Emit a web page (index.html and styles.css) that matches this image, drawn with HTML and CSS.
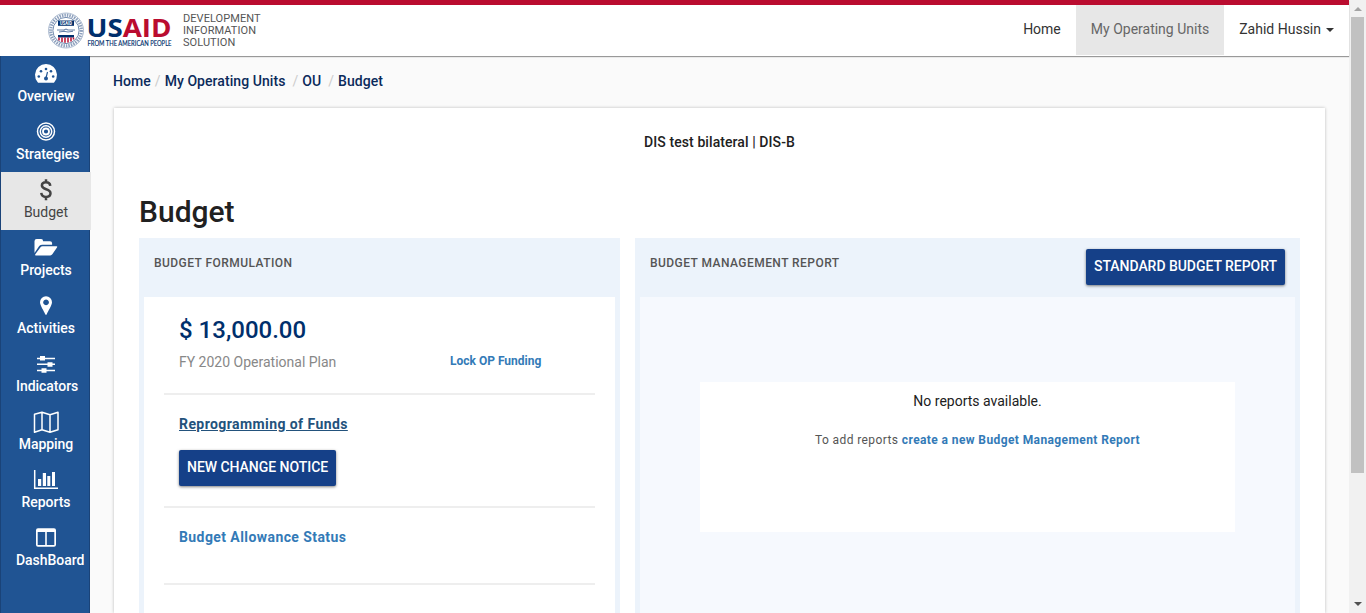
FILE: index.html
```
<!DOCTYPE html>
<html lang="en">
<head>
<meta charset="utf-8">
<title>Budget</title>
<link rel="stylesheet" href="styles.css">
</head>
<body>
<div class="page">
  <header class="topbar">
    <svg class="logo" width="125" height="38" viewBox="0 0 125 38">
      <circle cx="18" cy="18.500" r="15.300" fill="none" stroke="#8da0bd" stroke-width="3.200" stroke-dasharray="1.500 1"/>
      <circle cx="18" cy="18.500" r="17.500" fill="none" stroke="#8da0bd" stroke-width=".7"/>
      <circle cx="18" cy="18.500" r="13.100" fill="#fff" stroke="#6681a8" stroke-width=".9"/>
      <path d="M10 8.500h16v5.300H10z" fill="#002f6c"/>
      <text class="seal-text" x="12" y="12.800" textLength="12" lengthAdjust="spacingAndGlyphs">USAID</text>
      <path d="M9 18h7l2-1 2 1h7M11 20l5-.8 4 .8 5-.8" fill="none" stroke="#6681a8" stroke-width="1.100"/>
      <path d="M10 23h16v2.500H10z" fill="#002f6c"/>
      <path d="M11 25.500v3M14 25.500v4.500M17 25.500v5.300M20 25.500v5M23 25.500v4M25.500 25.500v2" stroke="#ba0c2f" stroke-width="1.500"/>
      <text class="logo-word" x="38.500" y="25.300" textLength="85" lengthAdjust="spacingAndGlyphs"><tspan fill="#002f6c">US</tspan><tspan fill="#ba0c2f">AID</tspan></text>
      <text class="logo-tag" x="39.500" y="33.800" textLength="84" lengthAdjust="spacingAndGlyphs">FROM THE AMERICAN PEOPLE</text>
    </svg>
    <div class="product">DEVELOPMENT<br>INFORMATION<br>SOLUTION</div>
    <nav class="topnav">
      <a class="topnav-item">Home</a>
      <a class="topnav-item topnav-active">My Operating Units</a>
      <a class="topnav-item">Zahid Hussin<span class="caret"></span></a>
    </nav>
  </header>
  <div class="body">
    <aside class="sidebar">
      <a class="side-item"><svg class="icon" viewBox="0 0 24 20"><path d="M3.700 18.300A11 11 0 1 1 20.300 18.300Q20 18.800 19.300 18.800H4.700Q4 18.800 3.700 18.300z" fill="#fff"/><g fill="#205493"><circle cx="4.800" cy="12.500" r="1.300"/><circle cx="7" cy="7.200" r="1.300"/><circle cx="12" cy="5" r="1.300"/><circle cx="17" cy="7.200" r="1.300"/><circle cx="19.200" cy="12.500" r="1.300"/><circle cx="12" cy="14.500" r="2"/></g><path d="m12 14 1.500-6" stroke="#205493" stroke-width="1.200"/></svg><span>Overview</span></a>
      <a class="side-item"><svg class="icon" viewBox="0 0 24 20"><g fill="none" stroke="#fff" stroke-width="1.500"><circle cx="12" cy="9.500" r="8.500"/><circle cx="12" cy="9.500" r="5.700"/><circle cx="12" cy="9.500" r="3" stroke-width="1.800"/></g></svg><span>Strategies</span></a>
      <a class="side-item side-active"><svg class="icon" viewBox="0 0 24 20"><path d="M16.300 5.800C16 3.300 14.300 2.300 12 2.300 9.600 2.300 7.900 3.500 7.900 5.600c0 4.700 8.600 2.700 8.600 7.700 0 2.300-1.900 3.600-4.500 3.600-2.700 0-4.500-1.400-4.700-4M12-.8v3.400M12 16.800v3.400" fill="none" stroke="#444" stroke-width="2.500"/></svg><span>Budget</span></a>
      <a class="side-item"><svg class="icon" viewBox="0 0 24 20"><path d="M.5 15V3.200Q.5 1 2.700 1h4.400q2 0 2 2.200H16q2.100 0 2.100 2v1.500H8.300Q6.500 6.700 5.200 8z" fill="#fff"/><path d="M8.500 8.200h14q1.300.1.500 1.300l-4.700 6.800q-.7 1.100-2 1.100H1.800q-1.200-.1-.5-1.100L6.500 9.200q.7-1 2-1z" fill="#fff"/></svg><span>Projects</span></a>
      <a class="side-item"><svg class="icon" viewBox="0 0 24 20"><path fill-rule="evenodd" d="M12 .2a6 6 0 0 1 6 6c0 3-4.300 9.400-5.200 12q-.8 1.300-1.600 0C10.300 15.600 6 9.200 6 6.200a6 6 0 0 1 6-6zm0 3.200a2.900 2.900 0 1 0 .1 0z" fill="#fff"/></svg><span>Activities</span></a>
      <a class="side-item"><svg class="icon" viewBox="0 0 24 20"><path d="M3 4.500h18M3 10.300h18M3 16.500h18" stroke="#fff" stroke-width="1.600"/><path d="M6 2h5v4.500H6zM13.500 8.200h5v4.500h-5zM7.500 14.200h5v4.500h-5z" fill="#fff"/></svg><span>Indicators</span></a>
      <a class="side-item"><svg class="icon" viewBox="0 0 24 20"><path d="M.5 2.300 8 .3l8 2.500 8-2.500v17.500l-8 2.500-8-2.500-7.500 2.500zM8 .3v17.500M16 2.800v17.500" fill="none" stroke="#fff" stroke-width="1.500" stroke-linejoin="round"/></svg><span>Mapping</span></a>
      <a class="side-item"><svg class="icon" viewBox="0 0 24 20"><path d="M.7 0v18.300H24" fill="none" stroke="#fff" stroke-width="1.500"/><path d="M4 9h3.200v7H4zM8.800 3H12v13H8.800zM13.300 6h3v10h-3zM18 2h3v14h-3z" fill="#fff"/></svg><span>Reports</span></a>
      <a class="side-item"><svg class="icon" viewBox="0 0 24 20"><path fill-rule="evenodd" d="M4 .3h16q2 0 2 2v14.400q0 2-2 2H4q-2 0-2-2V2.300q0-2 2-2zM3.700 4v13h7.500V4zm9.100 0v13h7.500V4z" fill="#fff"/></svg><span>DashBoard</span></a>
    </aside>
    <main class="main">
      <nav class="crumbs"><a>Home</a><i>/</i><a>My Operating Units</a><i class="gap">/</i><a>OU</a><i class="gap">/</i><a>Budget</a></nav>
      <section class="card">
        <div class="unit">DIS test bilateral | DIS-B</div>
        <h1 class="title">Budget</h1>
        <div class="panels">
          <section class="panel formulation">
            <div class="panel-head"><h2>BUDGET FORMULATION</h2></div>
            <div class="panel-body">
              <div class="row plan">
                <div class="amount-box"><div class="amount">$ 13,000.00</div><div class="plan-name">FY 2020 Operational Plan</div></div>
                <a class="lock">Lock OP Funding</a>
              </div>
              <div class="row reprogram"><a class="funds">Reprogramming of Funds</a><button class="button">NEW CHANGE NOTICE</button></div>
              <div class="row allowance"><a class="status">Budget Allowance Status</a></div>
            </div>
          </section>
          <section class="panel management">
            <div class="panel-head"><h2>BUDGET MANAGEMENT REPORT</h2><button class="button standard">STANDARD BUDGET REPORT</button></div>
            <div class="panel-body report-body">
              <div class="empty"><p class="none">No reports available.</p><p class="hint">To add reports <a>create a new Budget Management Report</a></p></div>
            </div>
          </section>
        </div>
      </section>
    </main>
  </div>
</div>
<div class="scrollbar"><span class="arrow-up"></span><span class="thumb"></span><span class="arrow-down"></span></div>
</body>
</html>
```
FILE: styles.css
```
* { box-sizing: border-box; }
body { margin: 0; height: 613px; display: flex; overflow: hidden; font-family: Roboto, sans-serif; font-size: 14px; line-height: 20px; color: #212121; background: #fafafa; }
h1, h2, p { margin: 0; }
.page { width: 1349px; height: 613px; display: flex; flex-direction: column; }
.topbar { height: 56px; flex: none; display: flex; align-items: flex-start; border-top: 5px solid #ba0c2f; background: #fff; box-shadow: 0 1px 1px #999; z-index: 1; }
.logo { margin: 7px 0 0 48px; flex: none; overflow: visible; }
.seal-text { font: bold 4.500px Roboto, sans-serif; fill: #fff; }
.logo-word { font: bold 25.500px "Open Sans", sans-serif; }
.logo-tag { font: 400 7.300px Lato, sans-serif; fill: #002f6c; stroke: #002f6c; stroke-width: .15px; }
.product { margin: 8px 0 0 10px; font-size: 11px; line-height: 12px; letter-spacing: .06px; color: #555; }
.topnav { margin-left: auto; display: flex; }
.topnav-item { height: 50px; padding: 14px 15px 0; color: #333; white-space: nowrap; display: flex; }
.topnav-active { color: #666; background: #e7e7e7; }
.caret { margin: 9px 0 0 5px; width: 8px; height: 4px; border: 4px solid transparent; border-top-color: #333; border-bottom: 0; }
.body { flex: 1; min-height: 0; display: flex; }
.sidebar { width: 90px; flex: none; background: #205493; border-left: 1px solid #1a4378; border-right: 1px solid #1a4378; z-index: 2; }
.side-item { width: 90px; height: 58px; padding: 8px 15px 0; display: block; text-align: center; white-space: nowrap; font-weight: 500; letter-spacing: -.04px; color: #fff; line-height: 20px; }
.side-item span { display: block; padding-top: 2px; }
.icon { display: block; width: 24px; height: 20px; margin: 0 auto; overflow: visible; }
.side-active { position: relative; background: #e7e7e7; color: #444; font-weight: 400; letter-spacing: 0; }
.main { flex: 1; min-height: 0; padding: 15px 24px 0; display: flex; flex-direction: column; }
.crumbs { height: 20px; flex: none; margin-left: -1px; font-weight: 500; letter-spacing: .06px; color: #0b2a5b; display: flex; white-space: pre; }
.crumbs i { font-style: normal; font-weight: 400; color: #ccc; padding: 0 4px; }
.crumbs .gap { padding-left: 7px; }
.card { margin-top: 17px; flex: 1; min-height: 0; padding: 24px 25px 0; background: #fff; box-shadow: 0 0 3px rgba(0,0,0,.25); display: flex; flex-direction: column; }
.unit { text-align: center; font-weight: 500; letter-spacing: .08px; }
.title { margin-top: 44px; height: 42px; flex: none; font-size: 30px; line-height: 32px; font-weight: 500; }
.panels { flex: 1; min-height: 0; display: flex; gap: 15px; }
.panel { padding: 0 5px; background: #ecf3fb; display: flex; flex-direction: column; }
.formulation { width: 481px; }
.management { width: 665px; }
.panel-head { height: 59px; flex: none; padding: 15px 10px 0; display: flex; justify-content: space-between; align-items: flex-start; }
.panel-head h2 { font-size: 12px; line-height: 20px; font-weight: 500; letter-spacing: .45px; color: #555; }
.panel-body { flex: 1; min-height: 0; padding: 0 20px; background: #fff; }
.row { padding: 0 15px; border-bottom: 2px solid #eee; }
.plan { height: 98px; padding-top: 18px; display: flex; }
.amount-box { width: 271px; }
.amount { font-size: 24px; line-height: 30px; font-weight: 500; color: #002f6c; }
.plan-name { margin-top: 7px; color: #888; }
.lock { margin-top: 36px; font-size: 12px; line-height: 20px; font-weight: 700; color: #337ab7; }
.reprogram { height: 113px; padding-top: 19px; }
.funds, .status { display: block; font-weight: 700; letter-spacing: .42px; }
.funds { color: #23527c; text-decoration: underline; }
.status { color: #337ab7; }
.allowance { height: 77px; padding-top: 19px; }
.button { border: 0; border-radius: 2px; padding: 0 8px 2px; height: 36px; margin-top: 16px; font: 500 14px/34px Roboto, sans-serif; letter-spacing: -.04px; color: #fff; background: #154088; box-shadow: 0 1px 3px rgba(0,0,0,.5); white-space: nowrap; }
.standard { margin-top: -4px; }
.report-body { padding: 85px 60px 0; background: #f6f9fe; }
.empty { height: 150px; padding: 9px 0 0 20px; background: #fff; text-align: center; }
.hint { margin-top: 19px; font-size: 12px; letter-spacing: .4px; color: #555; }
.hint a { font-weight: 700; color: #337ab7; }
.scrollbar { width: 17px; height: 613px; padding: 7px 2px; display: flex; flex-direction: column; align-items: center; background: #f1f1f1; }
.thumb { width: 13px; height: 456px; margin-top: 6px; background: #c1c1c1; }
.arrow-up { border: 4px solid transparent; border-top: 0; border-bottom-color: #a3a3a3; }
.arrow-down { margin-top: auto; border: 4px solid transparent; border-bottom: 0; border-top-color: #505050; }
```
